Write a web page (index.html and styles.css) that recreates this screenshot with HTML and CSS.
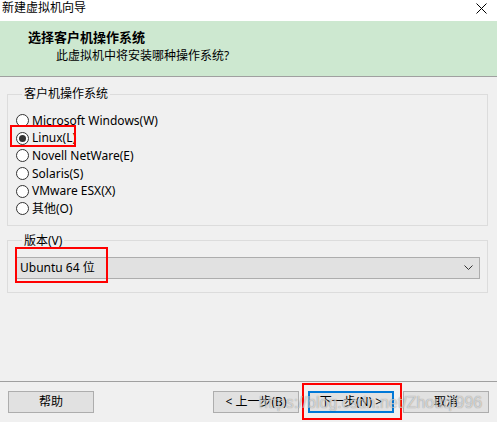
FILE: index.html
```html
<!DOCTYPE html>
<html lang="zh-CN">
<head>
    <meta charset="UTF-8">
    <meta name="viewport" content="width=device-width, initial-scale=1.0">
    <title>新建虚拟机向导</title>
    <link rel="stylesheet" href="styles.css">
</head>
<body>
    <div class="wizard">
        <!-- Title bar -->
        <div class="titlebar">
            <span class="title">新建虚拟机向导</span>
            <svg class="close" width="11" height="11" viewBox="0 0 11 11">
                <path d="M0.5 0.5 L10.5 10.5 M10.5 0.5 L0.5 10.5" stroke="#000" stroke-width="1" fill="none"/>
            </svg>
        </div>

        <!-- Header -->
        <div class="header">
            <div class="header-title">选择客户机操作系统</div>
            <div class="header-sub">此虚拟机中将安装哪种操作系统?</div>
        </div>

        <div class="content">
            <fieldset class="group group-os">
                <legend>客户机操作系统</legend>
                <label class="radio"><span class="dot"></span>Microsoft Windows(W)</label>
                <label class="radio checked"><span class="dot"></span>Linux(L)</label>
                <label class="radio"><span class="dot"></span>Novell NetWare(E)</label>
                <label class="radio"><span class="dot"></span>Solaris(S)</label>
                <label class="radio"><span class="dot"></span>VMware ESX(X)</label>
                <label class="radio"><span class="dot"></span>其他(O)</label>
            </fieldset>

            <fieldset class="group group-version">
                <legend>版本(V)</legend>
                <div class="select">
                    <span>Ubuntu 64 位</span>
                    <svg width="9" height="6" viewBox="0 0 9 6">
                        <path d="M0.5 0.5 L4.5 4.5 L8.5 0.5" stroke="#333" stroke-width="1" fill="none"/>
                    </svg>
                </div>
            </fieldset>
        </div>

        <!-- Buttons -->
        <div class="footer">
            <button class="btn">帮助</button>
            <div class="spacer"></div>
            <button class="btn">&lt; 上一步(B)</button>
            <button class="btn btn-default">下一步(N) &gt;</button>
            <button class="btn">取消</button>
        </div>

        <!-- Annotations drawn over the screenshot -->
        <div class="mark mark-linux"></div>
        <div class="mark mark-version"></div>
        <div class="mark mark-next"></div>
        <div class="watermark">https://blog.csdn.net/Zhouqi996</div>
    </div>
</body>
</html>
```

FILE: styles.css
```css
body {
    margin: 0;
    background-color: #f0f0f0;
    font-family: "Noto Sans", "Noto Sans CJK SC", sans-serif;
    font-size: 12px;
    color: #000;
}

.wizard {
    position: relative;
    width: 497px;
    height: 422px;
    overflow: hidden;
}

.titlebar {
    display: flex;
    justify-content: space-between;
    height: 21px;
    background-color: #fff;
}

.title {
    padding-left: 2px;
    line-height: 15px;
}

.close {
    margin: 3px 10px 0 0;
}

.header {
    height: 56px;
    box-sizing: border-box;
    padding-top: 8px;
    background-color: #cde8d0;
    border-bottom: 1px solid #a0a0a0;
}

.header-title {
    padding-left: 28px;
    font-size: 13px;
    font-weight: bold;
    line-height: 16px;
}

.header-sub {
    padding-left: 56px;
    margin-top: 3px;
    line-height: 16px;
}

.content {
    height: 304px;
    box-sizing: border-box;
    padding: 10px 9px 0 7px;
}

.group {
    margin: 0;
    min-width: 0;
    border: 1px solid #dcdcdc;
}

.group legend {
    margin-left: 6px;
    padding: 0 2px;
    line-height: 14px;
}

.group-os {
    padding: 11px 0 7px 8px;
}

.group-version {
    margin-top: 8px;
    padding: 9px 7px 13px 8px;
}

.radio {
    display: flex;
    align-items: center;
    height: 17.6px;
    line-height: 16px;
}

.dot {
    position: relative;
    width: 13px;
    height: 13px;
    box-sizing: border-box;
    margin-right: 3px;
    border: 1px solid #333;
    border-radius: 50%;
    background-color: #fff;
}

.radio.checked .dot::after {
    content: "";
    position: absolute;
    left: 2px;
    top: 2px;
    width: 7px;
    height: 7px;
    border-radius: 50%;
    background-color: #333;
}

.select {
    display: flex;
    align-items: center;
    justify-content: space-between;
    height: 22px;
    box-sizing: border-box;
    padding: 0 6px 0 3px;
    border: 1px solid #adadad;
    background-color: #e1e1e1;
    line-height: 16px;
}

.footer {
    display: flex;
    gap: 9px;
    height: 40px;
    box-sizing: border-box;
    padding: 9px 8px 0 8px;
    border-top: 1px solid #a0a0a0;
}

.spacer {
    flex: 1;
}

.btn {
    width: 86px;
    height: 22px;
    padding: 0;
    border: 1px solid #adadad;
    background-color: #e1e1e1;
    font-family: inherit;
    font-size: 12px;
    line-height: 16px;
    color: #000;
}

.btn-default {
    border: 2px solid #0078d7;
}

/* red annotation boxes */
.mark {
    position: absolute;
    box-sizing: border-box;
    border: 2px solid #f00;
}

.mark-linux {
    left: 10px;
    top: 125px;
    width: 66px;
    height: 22px;
}

.mark-version {
    left: 15px;
    top: 247px;
    width: 93px;
    height: 36px;
}

.mark-next {
    left: 302px;
    top: 383px;
    width: 100px;
    height: 37px;
}

.watermark {
    position: absolute;
    left: 259px;
    top: 394px;
    font-family: "Liberation Sans", sans-serif;
    font-size: 16px;
    line-height: 18px;
    color: rgba(255, 255, 255, 0.6);
    text-shadow: 0 0 1px rgba(0, 0, 0, 0.45);
    white-space: nowrap;
}
```
